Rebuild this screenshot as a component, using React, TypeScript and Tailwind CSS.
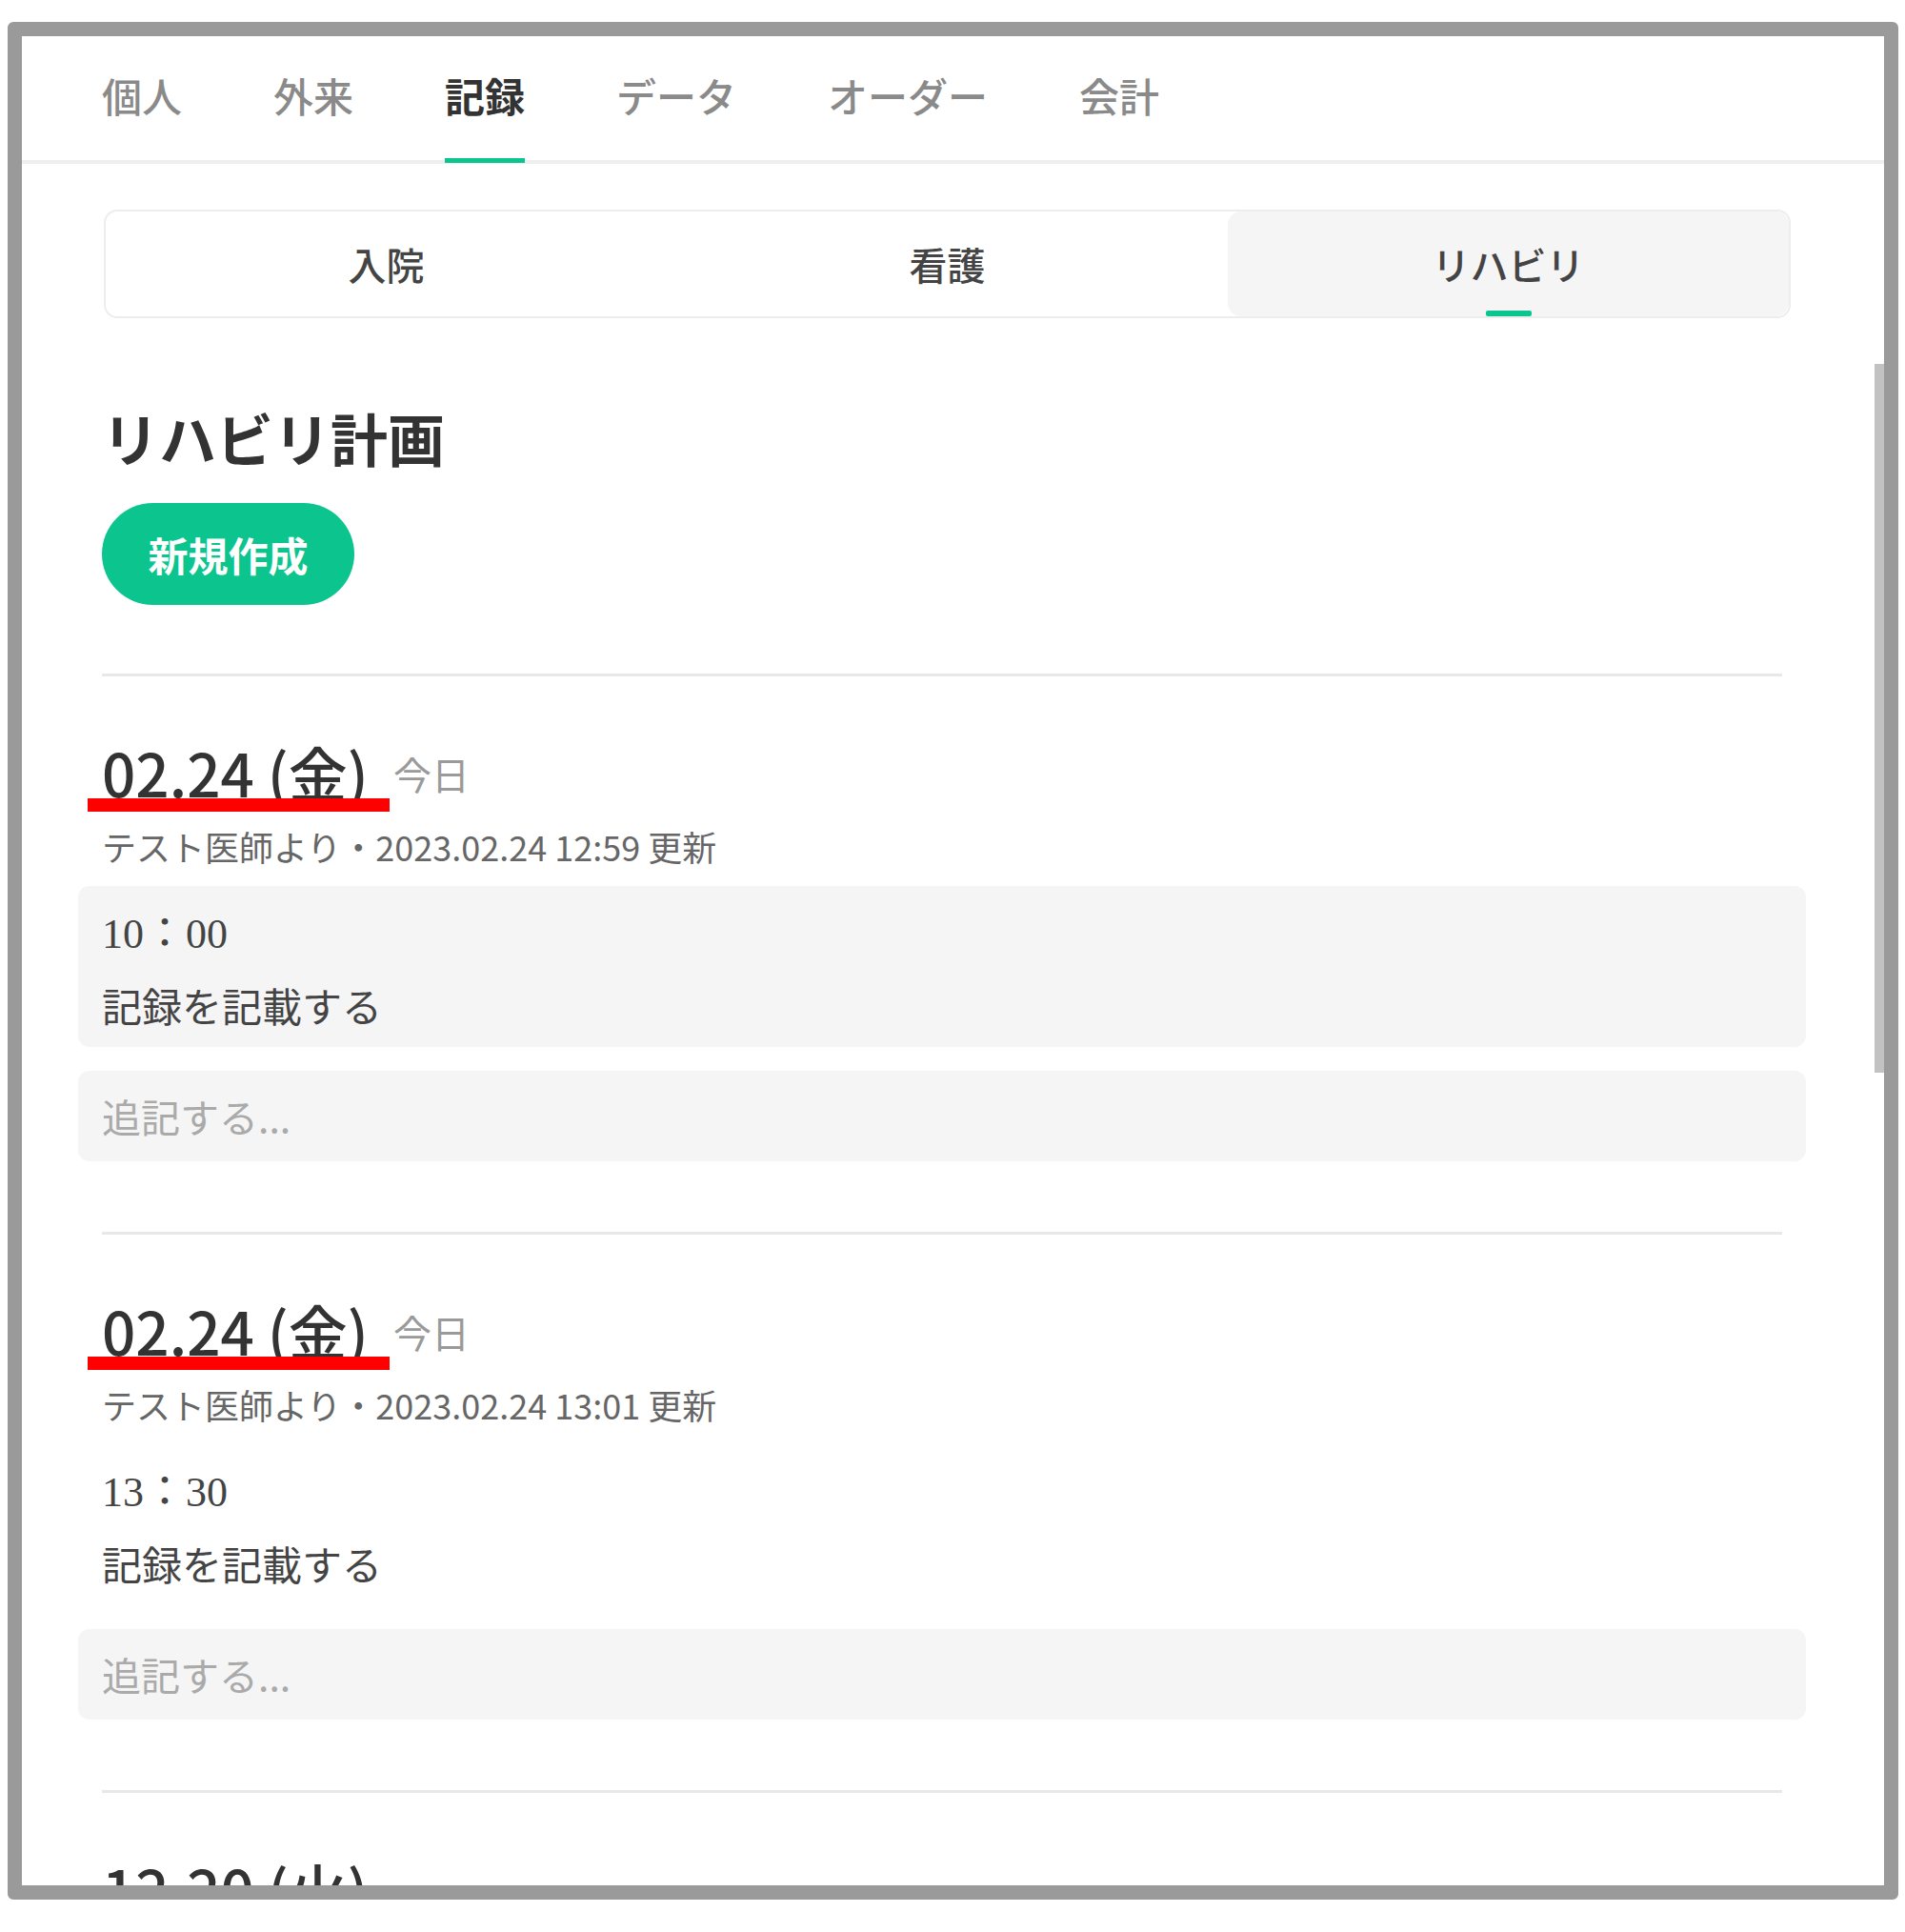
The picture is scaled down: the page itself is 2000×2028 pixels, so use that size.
import React from "react";

const tabs = ["個人", "外来", "記録", "データ", "オーダー", "会計"];
const subTabs = ["入院", "看護", "リハビリ"];

type Entry = {
  date: string;
  today?: boolean;
  updated: string;
  time: string;
  body: string;
  highlight?: boolean;
  marked?: boolean;
};

const entries: Entry[] = [
  { date: "02.24 (金)", today: true, updated: "2023.02.24 12:59", time: "10：00", body: "記録を記載する", highlight: true, marked: true },
  { date: "02.24 (金)", today: true, updated: "2023.02.24 13:01", time: "13：30", body: "記録を記載する", marked: true },
  { date: "12.20 (火)", updated: "2022.12.20 10:12", time: "09：00", body: "記録を記載する" },
];

const RecordEntry = ({ entry }: { entry: Entry }) => {
  return (
    <div className="border-t-[3px] border-[#e8e8e8] pt-[69px] pb-[74px]">
      <div className="relative flex items-center h-[62px]">
        <span className="text-[62px] leading-[62px] font-medium text-[#333]">{entry.date}</span>
        {entry.today && <span className="ml-[26px] mt-[4px] text-[40px] leading-none text-[#9a9a9a]">今日</span>}
        {entry.marked && <div className="absolute -left-[15px] top-[59px] w-[317px] h-[14px] bg-[#ff0000]" />}
      </div>
      <div className="mt-[27px] h-[40px] flex items-center text-[36px] text-[#666]">
        テスト医師より・{entry.updated} 更新
      </div>
      <div className={`mt-[22px] -mx-[25px] px-[25px] pt-[26px] pb-[20px] rounded-[12px] ${entry.highlight ? "bg-[#f5f5f5]" : ""}`}>
        <div className="h-[50px] flex items-center text-[44px] text-[#444] font-['Liberation_Serif','Noto_Sans_CJK_JP',serif]">
          {entry.time}
        </div>
        <div className="mt-[23px] h-[50px] flex items-center text-[42px] text-[#444]">{entry.body}</div>
      </div>
      <div className="mt-[25px] -mx-[25px] px-[25px] h-[95px] flex items-center rounded-[12px] bg-[#f5f5f5] text-[41px] text-[#aaa]">
        追記する...
      </div>
    </div>
  );
};

const App = () => {
  return (
    <div className="min-h-screen bg-white pt-[23px] pl-[8px] font-['Noto_Sans_CJK_JP','Noto_Sans',sans-serif]">
      <div className="relative w-[1985px] h-[1971px] border-[15px] border-[#9a9a9a] rounded-[6px] overflow-hidden bg-white">
        {/* top tabs */}
        <div className="h-[134px] border-b-[4px] border-[#efefef] flex items-stretch gap-[96px] pl-[84px]">
          {tabs.map((t, i) => (
            <div key={t} className="relative flex items-center pb-[6px]">
              <span className={`text-[42px] leading-none ${i === 2 ? "text-[#333] font-bold" : "text-[#8a8a8a] font-medium"}`}>{t}</span>
              {i === 2 && <div className="absolute left-0 right-0 -bottom-[3px] h-[5px] bg-[#0cc48d]" />}
            </div>
          ))}
        </div>

        {/* scrollbar */}
        <div className="absolute right-0 top-[344px] w-[10px] h-[744px] bg-[#c2c2c2]" />

        <div className="pl-[84px] pr-[107px]">
          {/* sub tabs */}
          <div className="mt-[48px] ml-[2px] -mr-[9px] h-[114px] flex border-2 border-[#ededed] rounded-[14px] overflow-hidden">
            {subTabs.map((t, i) => (
              <div key={t} className={`relative flex-1 flex items-center justify-center ${i === 2 ? "bg-[#f5f5f5] rounded-[14px]" : ""}`}>
                <span className="text-[40px] leading-none font-medium text-[#444]">{t}</span>
                {i === 2 && <div className="absolute bottom-0 left-1/2 -translate-x-1/2 w-[48px] h-[6px] rounded-[2px] bg-[#0cc48d]" />}
              </div>
            ))}
          </div>

          <h1 className="mt-[95px] text-[60px] leading-none font-bold text-[#333]">リハビリ計画</h1>

          <button className="mt-[39px] w-[265px] h-[107px] rounded-full bg-[#0cc48d] text-white text-[42px] font-bold">
            新規作成
          </button>

          <div className="mt-[72px]">
            {entries.map((e, i) => (
              <RecordEntry key={i} entry={e} />
            ))}
          </div>
        </div>
      </div>
    </div>
  );
};

export default App;
